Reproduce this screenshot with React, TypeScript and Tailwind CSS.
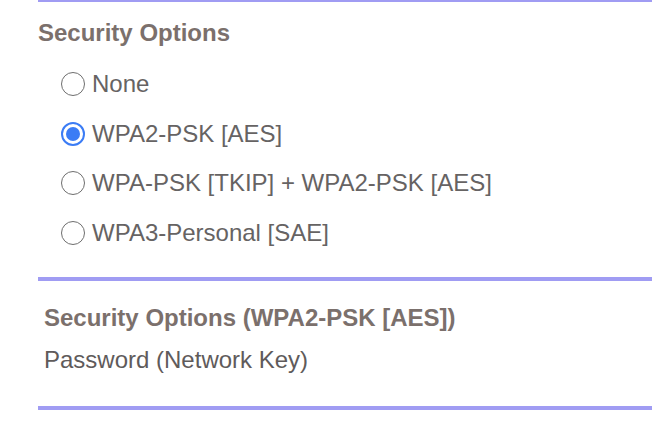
import React from 'react';

const options = [
  'None',
  'WPA2-PSK [AES]',
  'WPA-PSK [TKIP] + WPA2-PSK [AES]',
  'WPA3-Personal [SAE]',
];

function Radio({ checked }: { checked: boolean }) {
  if (checked) {
    return (
      <span className="flex items-center justify-center w-[24px] h-[24px] rounded-full border-[2.5px] border-[#3b7cf5] bg-white shrink-0">
        <span className="w-[14px] h-[14px] rounded-full bg-[#3b7cf5]" />
      </span>
    );
  }
  return <span className="w-[24px] h-[24px] rounded-full border-[1.5px] border-[#6e6e6e] bg-white shrink-0" />;
}

export default function App() {
  const [selected, setSelected] = React.useState(1);

  return (
    <div className="w-[652px] h-[446px] overflow-hidden bg-white font-['Liberation_Sans',Arial,sans-serif]">
      <div className="ml-[38px] -mt-[2px] h-[4px] bg-[#a09cf3]" />

      <h2 className="ml-[38px] mt-[17px] text-[24px] leading-[28px] font-bold text-[#7b706c]">Security Options</h2>

      <div className="ml-[61px] mt-[25px] flex flex-col gap-[25.5px]">
        {options.map((opt, i) => (
          <label key={opt} className="flex items-center gap-[7px] h-[24px] cursor-pointer" onClick={() => setSelected(i)}>
            <Radio checked={selected === i} />
            <span className="text-[24px] text-[#666363]">{opt}</span>
          </label>
        ))}
      </div>

      <div className="ml-[38px] mt-[32px] h-[4px] bg-[#a09cf3]" />

      <div className="ml-[44px] mt-[23px]">
        <h3 className="text-[24px] leading-[28px] font-bold text-[#7b706c]">Security Options (WPA2-PSK [AES])</h3>
        <p className="mt-[14px] text-[24px] leading-[28px] text-[#5f5b5b]">Password (Network Key)</p>
      </div>

      <div className="ml-[38px] mt-[32px] h-[4px] bg-[#a09cf3]" />
    </div>
  );
}
